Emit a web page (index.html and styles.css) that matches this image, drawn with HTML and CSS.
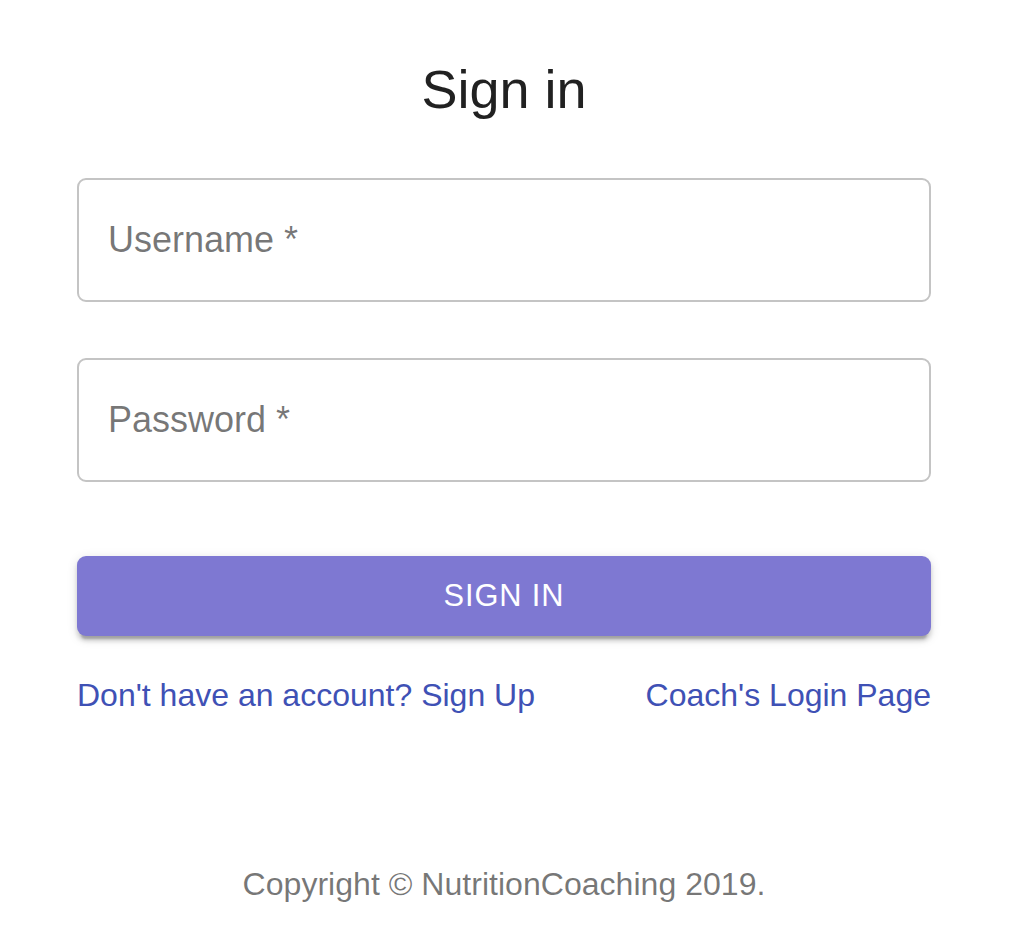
FILE: index.html
```html
<!DOCTYPE html>
<html lang="en">
<head>
<meta charset="utf-8">
<title>Sign in</title>
<link rel="stylesheet" href="styles.css">
</head>
<body>
<main class="container">
  <h1 class="title">Sign in</h1>
  <form class="form">
    <div class="field field-first"><span class="label">Username *</span></div>
    <div class="field field-second"><span class="label">Password *</span></div>
    <button type="button" class="submit">SIGN IN</button>
    <div class="links">
      <a class="link" href="#">Don't have an account? Sign Up</a>
      <a class="link" href="#">Coach's Login Page</a>
    </div>
  </form>
  <p class="copyright">Copyright © NutritionCoaching 2019.</p>
</main>
</body>
</html>
```

FILE: styles.css
```css
html, body {
  margin: 0;
  padding: 0;
  background: #ffffff;
}

body {
  font-family: "Liberation Sans", Arial, sans-serif;
}

.container {
  width: 854px;
  margin-left: 77px;
  display: flex;
  flex-direction: column;
}

.title {
  margin: 54px 0 0;
  font-size: 54px;
  line-height: 70px;
  font-weight: 400;
  color: rgba(0, 0, 0, 0.87);
  text-align: center;
}

.form {
  display: flex;
  flex-direction: column;
}

.field {
  box-sizing: border-box;
  height: 124px;
  border: 2px solid #c4c4c4;
  border-radius: 9px;
  display: flex;
  align-items: center;
  padding-left: 29px;
}

.field-first {
  margin-top: 54px;
}

.field-second {
  margin-top: 56px;
}

.label {
  font-size: 36px;
  line-height: 40px;
  color: rgba(0, 0, 0, 0.54);
}

.submit {
  margin-top: 74px;
  height: 80px;
  border: none;
  border-radius: 9px;
  background: #7e78d2;
  color: #ffffff;
  font-family: "Liberation Sans", Arial, sans-serif;
  font-size: 30.8px;
  letter-spacing: 0.88px;
  display: flex;
  align-items: center;
  justify-content: center;
  padding: 0;
  box-shadow: 0 6.6px 2.2px -4.4px rgba(0, 0, 0, 0.2),
              0 4.4px 4.4px 0 rgba(0, 0, 0, 0.14),
              0 2.2px 11px 0 rgba(0, 0, 0, 0.12);
}

.links {
  margin-top: 37px;
  display: flex;
  justify-content: space-between;
}

.link {
  font-size: 32px;
  line-height: 44px;
  color: #3f51b5;
  text-decoration: none;
}

.copyright {
  margin: 145px 0 0;
  font-size: 32.1px;
  line-height: 44px;
  color: rgba(0, 0, 0, 0.54);
  text-align: center;
}
```
